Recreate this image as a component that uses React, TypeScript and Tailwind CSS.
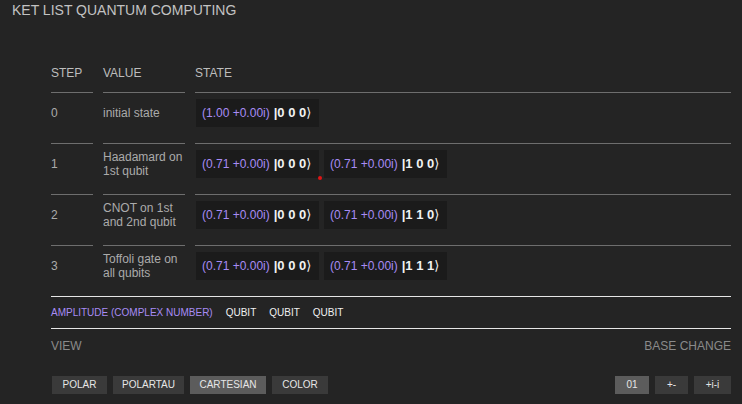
import React from 'react';

interface Step {
  step: string;
  value: string[];
  kets: { amp: string; bits: string }[];
  dot?: boolean;
}

const steps: Step[] = [
  { step: '0', value: ['initial state'], kets: [{ amp: '(1.00 +0.00i)', bits: '0 0 0' }] },
  {
    step: '1',
    value: ['Haadamard on', '1st qubit'],
    kets: [
      { amp: '(0.71 +0.00i)', bits: '0 0 0' },
      { amp: '(0.71 +0.00i)', bits: '1 0 0' },
    ],
    dot: true,
  },
  {
    step: '2',
    value: ['CNOT on 1st', 'and 2nd qubit'],
    kets: [
      { amp: '(0.71 +0.00i)', bits: '0 0 0' },
      { amp: '(0.71 +0.00i)', bits: '1 1 0' },
    ],
  },
  {
    step: '3',
    value: ['Toffoli gate on', 'all qubits'],
    kets: [
      { amp: '(0.71 +0.00i)', bits: '0 0 0' },
      { amp: '(0.71 +0.00i)', bits: '1 1 1' },
    ],
  },
];

const views = [
  { label: 'POLAR', w: 'w-[55px]', active: false },
  { label: 'POLARTAU', w: 'w-[71px]', active: false },
  { label: 'CARTESIAN', w: 'w-[76px]', active: true },
  { label: 'COLOR', w: 'w-[56px]', active: false },
];

const bases = [
  { label: '01', w: 'w-[34px]', active: true },
  { label: '+-', w: 'w-[33px]', active: false },
  { label: '+i-i', w: 'w-[37px]', active: false },
];

function Ket({ amp, bits, dot }: { amp: string; bits: string; dot?: boolean }) {
  return (
    <div className="relative h-[28px] w-[123px] flex items-center pl-[6px] bg-[#1b1b1b] text-[12px] whitespace-nowrap">
      <span className="text-[#a88cf5]">{amp}</span>
      <span className="ml-[4px] text-[13px] font-bold text-[#f2f2f2]">
        |{bits}
        <span style={{ fontFamily: '"DejaVu Sans", sans-serif' }} className="font-normal">⟩</span>
      </span>
      {dot && <span className="absolute -right-[3px] -bottom-[2px] w-[4px] h-[4px] rounded-full bg-[#e01515]" />}
    </div>
  );
}

export default function App() {
  return (
    <div
      className="w-[742px] h-[404px] bg-[#242424] overflow-hidden"
      style={{ fontFamily: '"Liberation Sans", Arial, sans-serif' }}
    >
      <div className="pt-[2px] pl-[12px] text-[14px] leading-[16px] text-[#c2c2c2]">KET LIST QUANTUM COMPUTING</div>

      <div className="ml-[51px] w-[680px] mt-[42px]">
        {/* header */}
        <div className="flex gap-[10px] text-[12px] leading-[14px] text-[#bdbdbd]">
          <div className="w-[42px] h-[33px] pt-[6px] border-b border-[#6e6e6e]">STEP</div>
          <div className="w-[82px] h-[33px] pt-[6px] border-b border-[#6e6e6e]">VALUE</div>
          <div className="flex-1 h-[33px] pt-[6px] border-b border-[#6e6e6e]">STATE</div>
        </div>

        {steps.map((s, i) => {
          const last = i === steps.length - 1;
          const line = last ? 'h-[50px]' : 'h-[51px] border-b border-[#6e6e6e]';
          return (
            <div key={s.step} className="flex gap-[10px] text-[12px] leading-[14px] text-[#ababab]">
              <div className={`w-[42px] pt-[6px] ${line}`}>
                <div className="h-[28px] flex items-center">{s.step}</div>
              </div>
              <div className={`w-[82px] pt-[6px] ${line}`}>
                <div className="h-[28px] flex flex-col justify-center whitespace-nowrap">
                  {s.value.map(v => (
                    <div key={v}>{v}</div>
                  ))}
                </div>
              </div>
              <div className={`flex-1 pt-[6px] pl-[1px] ${line}`}>
                <div className="flex gap-[5px]">
                  {s.kets.map((k, j) => (
                    <Ket key={j} amp={k.amp} bits={k.bits} dot={s.dot && j === 0} />
                  ))}
                </div>
              </div>
            </div>
          );
        })}

        {/* legend */}
        <div className="h-[33px] border-y border-[#e6e6e6] flex items-center gap-[13px] text-[10px] leading-[12px]">
          <span className="text-[#a88cf5]">AMPLITUDE (COMPLEX NUMBER)</span>
          <span className="text-[#f0f0f0]">QUBIT</span>
          <span className="text-[#f0f0f0]">QUBIT</span>
          <span className="text-[#f0f0f0]">QUBIT</span>
        </div>

        <div className="flex justify-between mt-[10px] text-[12px] leading-[14px] text-[#8a8a8a]">
          <span>VIEW</span>
          <span>BASE CHANGE</span>
        </div>

        <div className="flex justify-between mt-[23px]">
          <div className="flex gap-[6px] pl-[1px]">
            {views.map(v => (
              <button
                key={v.label}
                className={`${v.w} h-[18px] text-[10px] leading-[12px] text-[#e6e6e6] ${v.active ? 'bg-[#5c5c5c]' : 'bg-[#3a3a3a]'}`}
              >
                {v.label}
              </button>
            ))}
          </div>
          <div className="flex gap-[6px]">
            {bases.map(b => (
              <button
                key={b.label}
                className={`${b.w} h-[18px] text-[10px] leading-[12px] text-[#e6e6e6] ${b.active ? 'bg-[#5c5c5c]' : 'bg-[#3a3a3a]'}`}
              >
                {b.label}
              </button>
            ))}
          </div>
        </div>
      </div>
    </div>
  );
}
